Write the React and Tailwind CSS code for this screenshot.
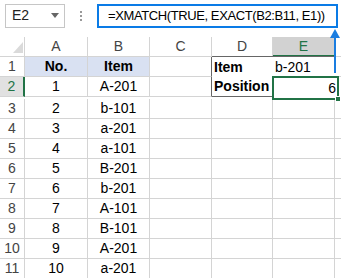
const cols = [
  { w: 'w-[63px]', label: 'A' },
  { w: 'w-[62px]', label: 'B' },
  { w: 'w-[62px]', label: 'C' },
  { w: 'w-[61px]', label: 'D' },
  { w: 'w-[62px]', label: 'E' },
]

const data = [
  ['1', 'A-201'],
  ['2', 'b-101'],
  ['3', 'a-201'],
  ['4', 'a-101'],
  ['5', 'B-201'],
  ['6', 'b-201'],
  ['7', 'A-101'],
  ['8', 'B-101'],
  ['9', 'A-201'],
  ['10', 'a-201'],
]

const cell = 'h-[20px] shrink-0 border-r border-b border-[#d4d4d4] flex items-center'

function FormulaBar() {
  return (
    <div className="flex items-center h-[28px] pt-[3px] pl-[5px]">
      <div className="w-[60px] h-[24px] border border-[#c6c6c6] flex items-center justify-between pl-[6px] pr-[5px] text-[14px] text-[#222]">
        <span>E2</span>
        <span className="w-0 h-0 border-l-[4px] border-r-[4px] border-t-[5px] border-l-transparent border-r-transparent border-t-[#666]"></span>
      </div>
      <div className="w-[32px] flex flex-col items-center gap-[2px]">
        <span className="w-[2px] h-[2px] bg-[#999]"></span>
        <span className="w-[2px] h-[2px] bg-[#999]"></span>
        <span className="w-[2px] h-[2px] bg-[#999]"></span>
      </div>
      <div className="w-[241px] h-[24px] border-2 border-[#0a7be6] flex items-center pl-[9px] text-[13px] tracking-[-0.4px] text-black whitespace-nowrap">
        =XMATCH(TRUE, EXACT(B2:B11, E1))
      </div>
    </div>
  )
}

function HeaderRow() {
  return (
    <div className="flex">
      <div className={`${cell} w-[25px] justify-end items-end pr-[1px] pb-[3px]`}>
        <svg width="10" height="11" viewBox="0 0 10 11">
          <path d="M10 0 L10 11 L0 11 Z" fill="#dadada" />
        </svg>
      </div>
      {cols.map((c) =>
        c.label === 'E' ? (
          <div key={c.label} className={`${c.w} h-[20px] shrink-0 bg-[#d2d2d2] border-r border-[#c0c0c0] border-b-2 border-b-[#217346] flex items-center justify-center text-[#217346]`}>
            {c.label}
          </div>
        ) : (
          <div key={c.label} className={`${cell} ${c.w} justify-center text-[#444]`}>
            {c.label}
          </div>
        )
      )}
      <div className={`${cell} w-[6px] border-r-0`}></div>
    </div>
  )
}

export default function App() {
  return (
    <div className="relative w-[341px] h-[278px] overflow-hidden bg-white font-['Liberation_Sans',Arial,sans-serif] text-[14px] text-black">
      <FormulaBar />
      <div className="h-[9px]"></div>
      <HeaderRow />

      {/* row 1 */}
      <div className="flex">
        <div className={`${cell} w-[25px] justify-center text-[#444]`}>1</div>
        <div className={`${cell} w-[63px] justify-center bg-[#d9e1f2] font-bold`}>No.</div>
        <div className={`${cell} w-[62px] justify-center bg-[#d9e1f2] font-bold`}>Item</div>
        <div className={`${cell} w-[62px] border-r-[#666]`}></div>
        <div className="h-[20px] w-[61px] shrink-0 border-t border-[#666] flex items-center pl-[2px] font-bold -mt-px pt-px">Item</div>
        <div className="h-[20px] w-[62px] shrink-0 border-t border-[#666] flex items-center pl-[2px] -mt-px pt-px">b-201</div>
        <div className={`${cell} w-[6px] border-r-0`}></div>
      </div>

      {/* row 2 */}
      <div className="flex">
        <div className="h-[20px] w-[25px] shrink-0 bg-[#e1e1e1] border-b border-[#d4d4d4] border-r-2 border-r-[#217346] flex items-center justify-center text-[#217346]">2</div>
        <div className={`${cell} w-[63px] justify-center`}>{data[0][0]}</div>
        <div className={`${cell} w-[62px] justify-center`}>{data[0][1]}</div>
        <div className={`${cell} w-[62px] border-r-[#666]`}></div>
        <div className="h-[20px] w-[61px] shrink-0 border-b border-[#666] flex items-center pl-[2px] font-bold">Position</div>
        <div className="relative h-[20px] w-[62px] shrink-0 border-2 border-[#217346] -mt-px -mb-px box-content flex items-center justify-end pr-[1px] -ml-px">
          6
          <span className="absolute -right-[4px] -bottom-[4px] w-[6px] h-[6px] bg-[#217346] border border-white"></span>
        </div>
        <div className={`${cell} w-[5px] border-r-0`}></div>
      </div>

      {data.slice(1).map((r, i) => (
        <div key={i} className="flex">
          <div className={`${cell} w-[25px] justify-center text-[#444]`}>{i + 3}</div>
          <div className={`${cell} w-[63px] justify-center`}>{r[0]}</div>
          <div className={`${cell} w-[62px] justify-center`}>{r[1]}</div>
          <div className={`${cell} w-[62px]`}></div>
          <div className={`${cell} w-[61px]`}></div>
          <div className={`${cell} w-[62px]`}></div>
          <div className={`${cell} w-[6px] border-r-0`}></div>
        </div>
      ))}

      <svg className="absolute left-[328px] top-[27px]" width="12" height="46" viewBox="0 0 12 46">
        <line x1="7" y1="5" x2="7" y2="46" stroke="#1a7de0" strokeWidth="2" />
        <path d="M2 11 L7 2 L12 11 Z" fill="#1a7de0" />
      </svg>
    </div>
  )
}
